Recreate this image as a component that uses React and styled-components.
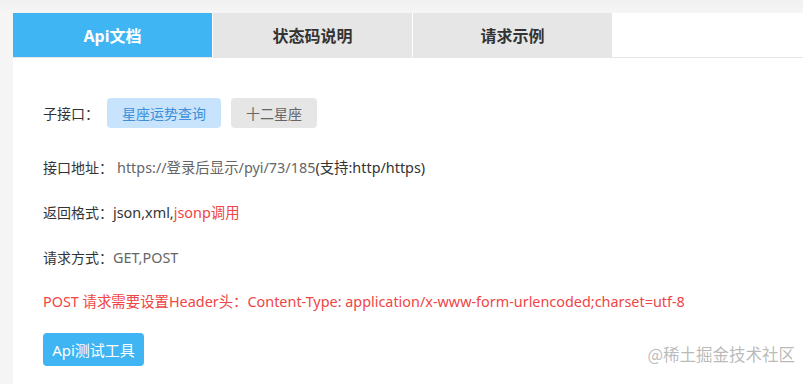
import React from "react";
import styled, { createGlobalStyle } from "styled-components";

const Global = createGlobalStyle`
  html, body { margin: 0; padding: 0; }
  body {
    background: #f4f4f4;
    font-family: "Noto Sans", "Noto Sans CJK SC", sans-serif;
    color: #333;
  }
`;

const Page = styled.div`
  position: relative;
  width: 803px;
  height: 384px;
  overflow: hidden;
  box-sizing: border-box;
  padding: 13px 0 0 13px;
  background: linear-gradient(#f0f0f0, #f5f5f5 12px, #f5f5f5);
`;

const Card = styled.div`
  background: #fff;
  height: 100%;
`;

const Tabs = styled.div`
  display: flex;
  gap: 1px;
  height: 44px;
  border-bottom: 1px solid #e6e6e6;
`;

const Tab = styled.div`
  width: 199px;
  display: flex;
  align-items: center;
  justify-content: center;
  font-size: 16px;
  font-weight: 700;
  background: ${(p) => (p.$active ? "#40b5f3" : "#e6e6e6")};
  color: ${(p) => (p.$active ? "#fff" : "#333")};
`;

const Content = styled.div`
  padding: 40px 0 0 30px;
  display: flex;
  flex-direction: column;
  align-items: flex-start;
`;

const SubRow = styled.div`
  display: flex;
  align-items: center;
  height: 30px;
  margin-bottom: 30px;
`;

const SubLabel = styled.span`
  font-size: 14px;
  color: #333;
  margin-right: 8px;
`;

const SubBtn = styled.span`
  height: 30px;
  padding: 0 15px;
  display: flex;
  align-items: center;
  border-radius: 4px;
  font-size: 14px;
  margin-right: 10px;
  background: ${(p) => (p.$active ? "#c7e4fc" : "#e6e6e6")};
  color: ${(p) => (p.$active ? "#3d8fd9" : "#666")};
`;

const Line = styled.div`
  height: 20px;
  line-height: 20px;
  font-size: 14px;
  color: ${(p) => p.$color || "#333"};
  margin-bottom: ${(p) => p.$mb ?? 25}px;
  white-space: nowrap;
`;

const Value = styled.span`
  font-size: 14.4px;
  color: ${(p) => p.$color || "#333"};
  margin-left: ${(p) => p.$ml || 0}px;
`;

const TestBtn = styled.button`
  height: 33px;
  width: 101px;
  border: none;
  border-radius: 4px;
  background: #40b5f3;
  color: #fff;
  font-family: inherit;
  font-size: 15px;
  padding: 0;
`;

const Watermark = styled.div`
  position: absolute;
  right: 8px;
  bottom: 18px;
  font-size: 16.5px;
  color: rgba(140, 140, 140, 0.6);
  font-family: "Noto Sans CJK SC", sans-serif;
`;

export default function App() {
  return (
    <>
      <Global />
      <Page>
        <Card>
          <Tabs>
            <Tab $active>Api文档</Tab>
            <Tab>状态码说明</Tab>
            <Tab>请求示例</Tab>
          </Tabs>
          <Content>
            <SubRow>
              <SubLabel>子接口：</SubLabel>
              <SubBtn $active>星座运势查询</SubBtn>
              <SubBtn>十二星座</SubBtn>
            </SubRow>
            <Line>
              接口地址：
              <Value $color="#666" $ml={4}>https://登录后显示/pyi/73/185</Value>
              <Value>(支持:http/https)</Value>
            </Line>
            <Line>
              返回格式：<Value>json,xml,</Value>
              <Value $color="#f04545">jsonp调用</Value>
            </Line>
            <Line $mb={24}>
              请求方式：<Value $color="#666">GET,POST</Value>
            </Line>
            <Line $mb={21}>
              <Value $color="#f04545">POST 请求需要设置Header头：Content-Type: application/x-www-form-urlencoded;charset=utf-8</Value>
            </Line>
            <TestBtn>Api测试工具</TestBtn>
          </Content>
        </Card>
        <Watermark>@稀土掘金技术社区</Watermark>
      </Page>
    </>
  );
}
